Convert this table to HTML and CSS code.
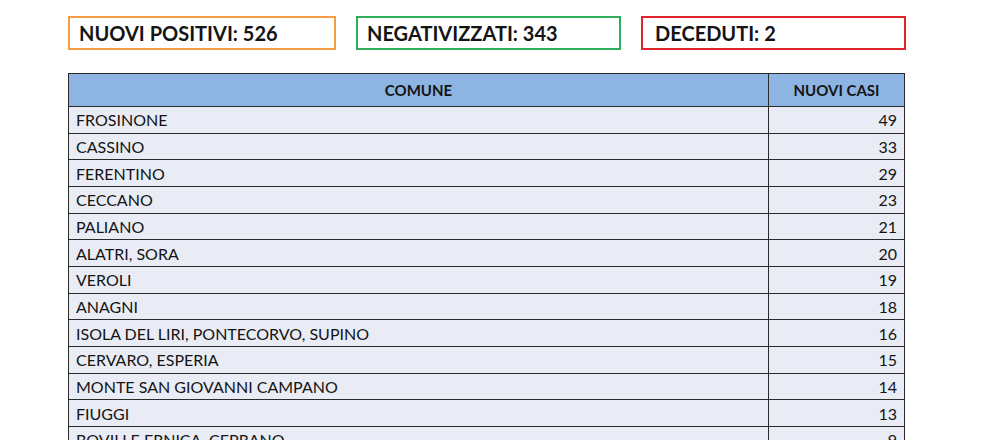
FILE: index.html
```html
<!DOCTYPE html>
<html lang="it">
<head>
<meta charset="utf-8">
<link rel="stylesheet" href="styles.css">
</head>
<body>
<div class="page">
  <div class="stats">
    <div class="stat stat-orange">NUOVI POSITIVI: 526</div>
    <div class="stat stat-green">NEGATIVIZZATI: 343</div>
    <div class="stat stat-red">DECEDUTI: 2</div>
  </div>
  <table class="cases">
    <thead>
      <tr><th class="c-name">COMUNE</th><th class="c-num">NUOVI CASI</th></tr>
    </thead>
    <tbody>
      <tr><td>FROSINONE</td><td class="num">49</td></tr>
      <tr><td>CASSINO</td><td class="num">33</td></tr>
      <tr><td>FERENTINO</td><td class="num">29</td></tr>
      <tr><td>CECCANO</td><td class="num">23</td></tr>
      <tr><td>PALIANO</td><td class="num">21</td></tr>
      <tr><td>ALATRI, SORA</td><td class="num">20</td></tr>
      <tr><td>VEROLI</td><td class="num">19</td></tr>
      <tr><td>ANAGNI</td><td class="num">18</td></tr>
      <tr><td>ISOLA DEL LIRI, PONTECORVO, SUPINO</td><td class="num">16</td></tr>
      <tr><td>CERVARO, ESPERIA</td><td class="num">15</td></tr>
      <tr><td>MONTE SAN GIOVANNI CAMPANO</td><td class="num">14</td></tr>
      <tr><td>FIUGGI</td><td class="num">13</td></tr>
      <tr><td>BOVILLE ERNICA, CEPRANO</td><td class="num">9</td></tr>
    </tbody>
  </table>
</div>
</body>
</html>
```
FILE: styles.css
```css
html, body {
  margin: 0;
  padding: 0;
  background: #ffffff;
  height: 440px;
  overflow: hidden;
}
.page {
  font-family: Lato, "Liberation Sans", sans-serif;
  color: #141414;
  padding: 16px 0 0 68px;
  width: 838px;
}
.stats {
  display: flex;
  gap: 20px;
  align-items: flex-start;
}
.stat {
  box-sizing: border-box;
  height: 34px;
  border: 2px solid;
  font-weight: 700;
  font-size: 20px;
  line-height: 30px;
  padding-left: 9px;
  white-space: nowrap;
}
.stat-orange { width: 268px; border-color: #f59d45; }
.stat-green { width: 265px; border-color: #2fae5a; }
.stat-red { width: 265px; border-color: #e0242b; padding-left: 12px; }

.cases {
  margin-top: 23px;
  width: 837px;
  border-collapse: collapse;
  table-layout: fixed;
}
.cases th, .cases td {
  border: 1px solid #2a2a2a;
  padding: 0 7px;
}
.cases th {
  background: #8db4e2;
  height: 32px;
  font-size: 15px;
  font-weight: 700;
  text-align: center;
}
.c-name { width: auto; }
.c-num { width: 121px; }
.cases td {
  background: #e9ecf5;
  height: 24.67px;
  font-size: 16px;
  line-height: 20px;
  padding-top: 1px;
  text-align: left;
}
.cases td.num {
  text-align: right;
  padding-right: 7px;
}
```
